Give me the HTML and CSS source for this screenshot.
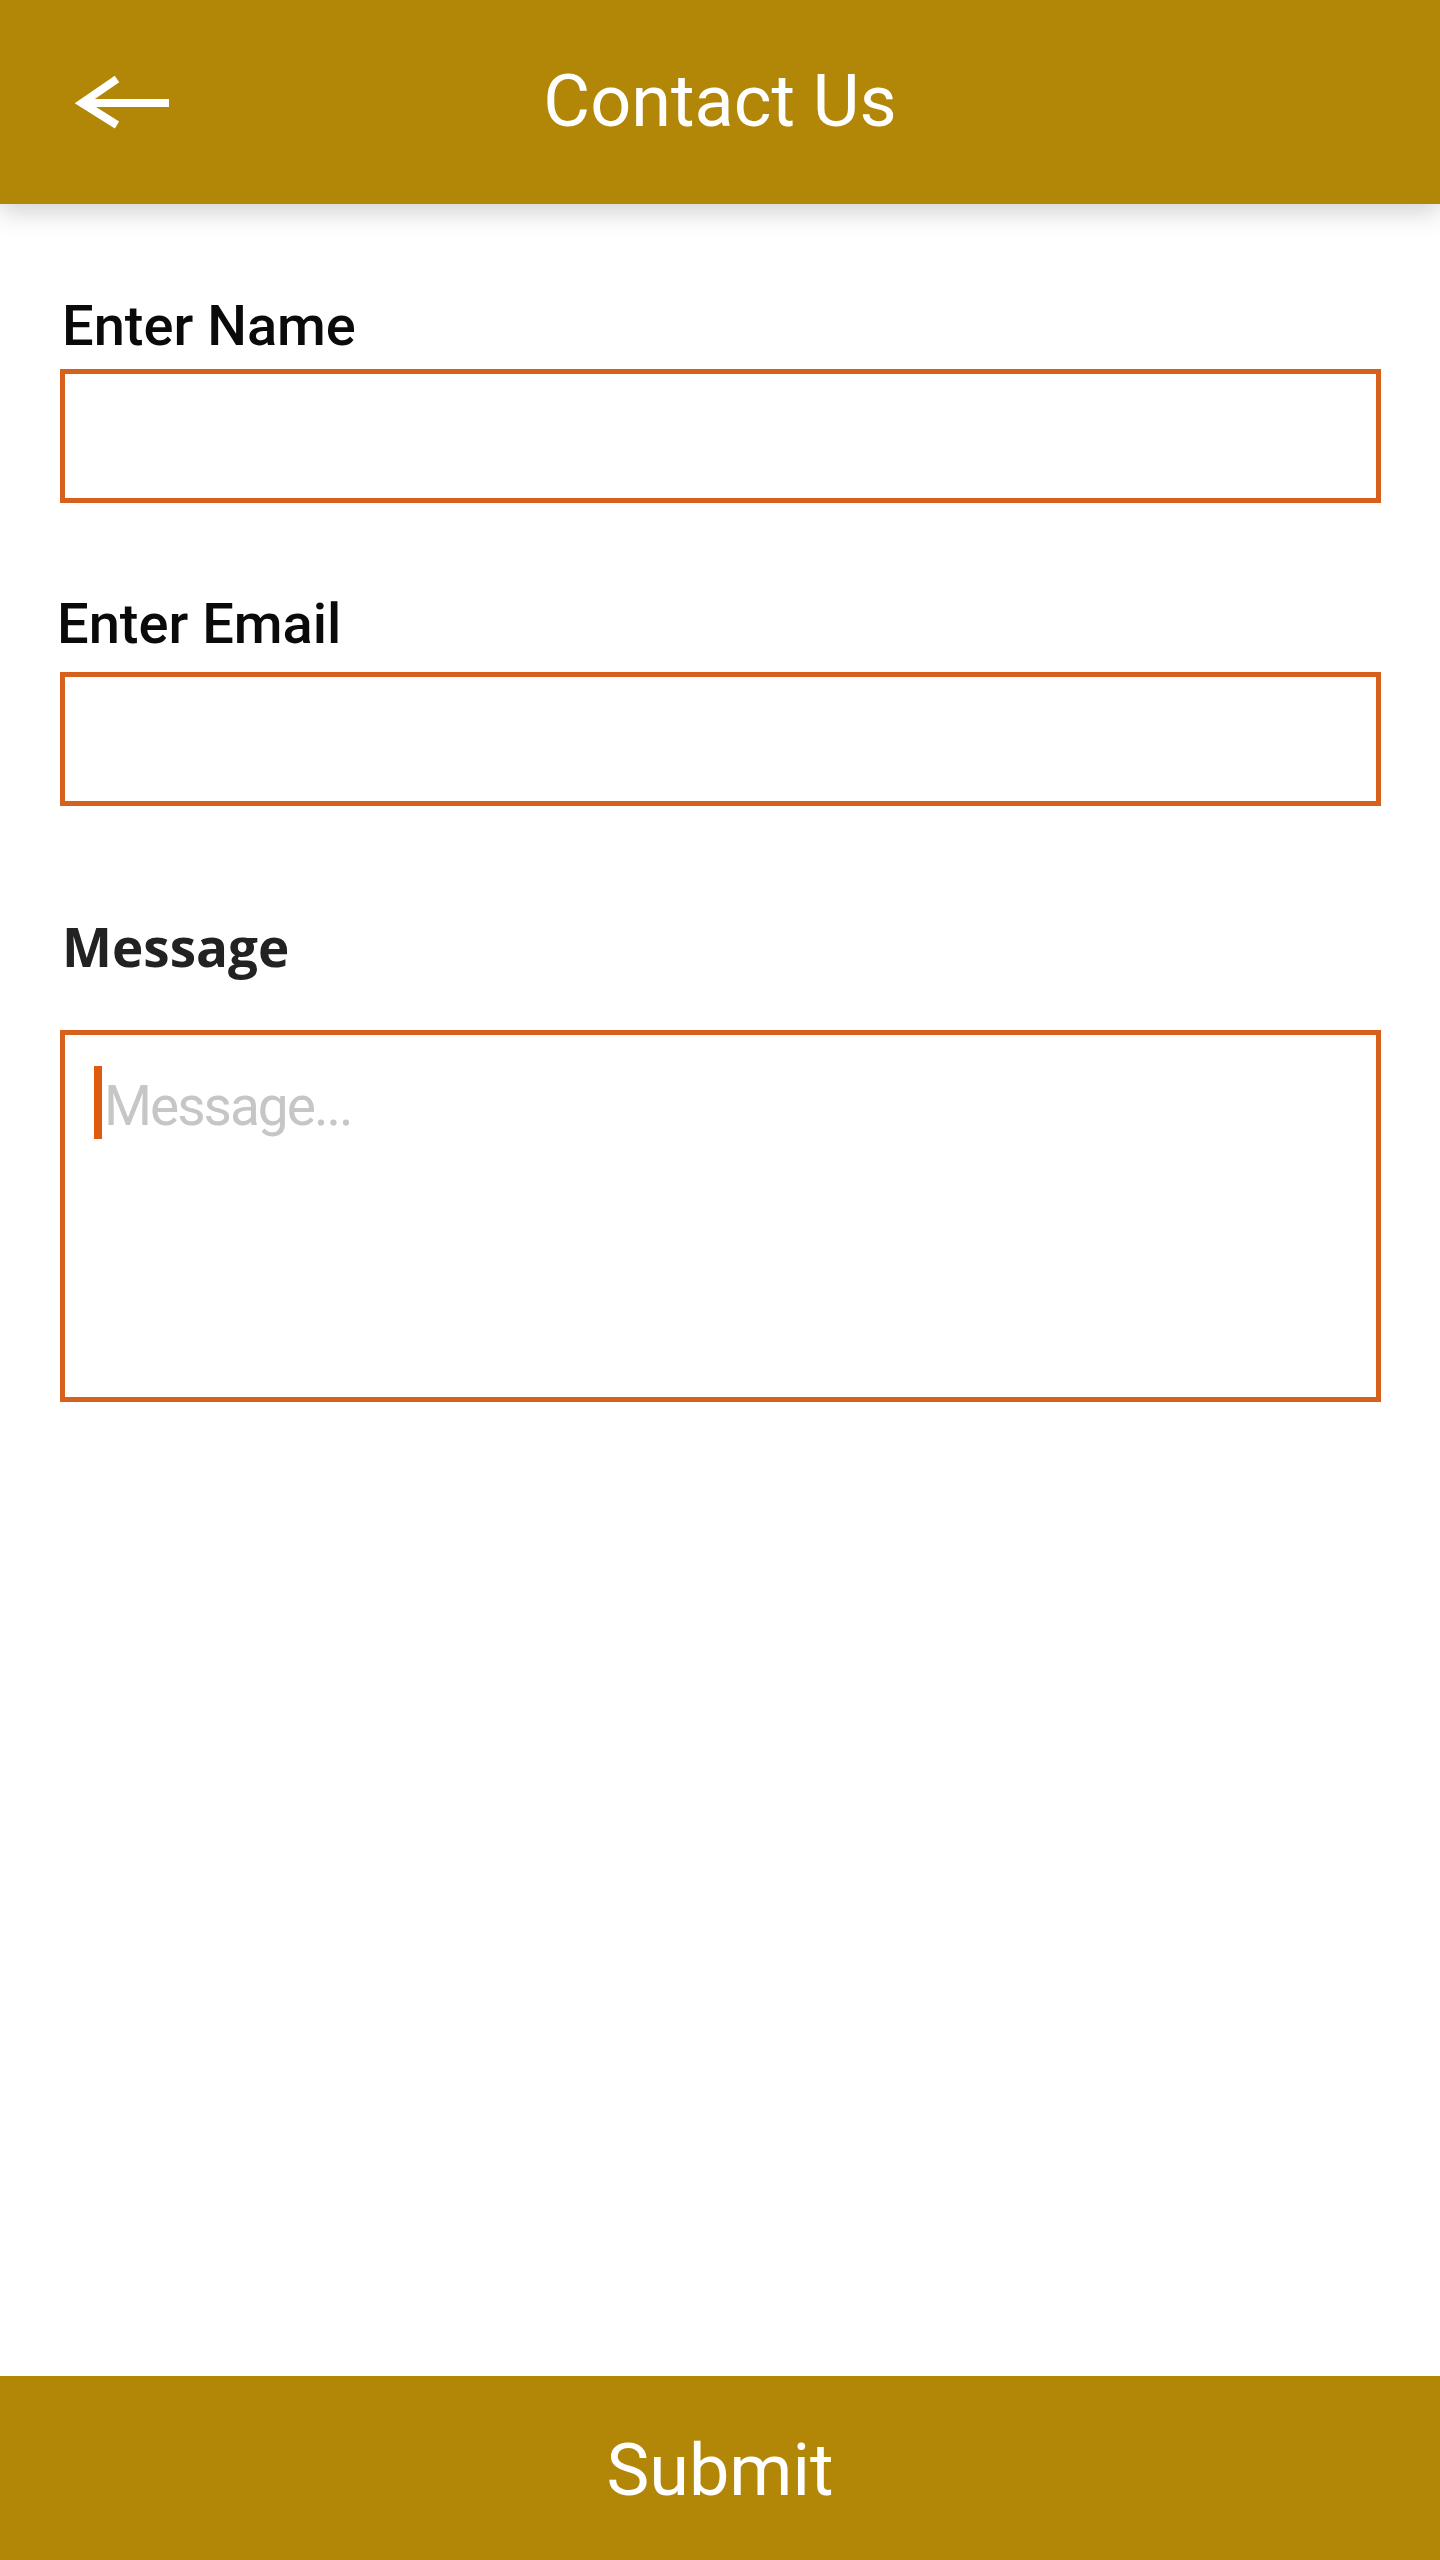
FILE: index.html
```html
<!DOCTYPE html>
<html lang="en">
<head>
<meta charset="utf-8">
<title>Contact Us</title>
<link rel="stylesheet" href="styles.css">
</head>
<body>
<div class="app">
  <header class="topbar">
    <div class="back">
      <svg width="110" height="60" viewBox="70 72 110 60" aria-hidden="true">
        <path d="M169 103 H88" stroke="#fff" stroke-width="8" fill="none"/>
        <path d="M117 79 L82 103 L117 125" stroke="#fff" stroke-width="8" fill="none" stroke-linejoin="miter"/>
      </svg>
    </div>
    <h1 class="title">Contact Us</h1>
    <div class="spacer"></div>
  </header>

  <main class="form">
    <label class="label label-name">Enter Name</label>
    <input class="field field-name" type="text">

    <label class="label label-email">Enter Email</label>
    <input class="field field-email" type="email">

    <label class="label-message">Message</label>
    <div class="area-wrap">
      <textarea class="area" placeholder="Message..."></textarea>
      <span class="caret"></span>
    </div>
  </main>

  <footer class="submit">Submit</footer>
</div>
</body>
</html>
```

FILE: styles.css
```css
html, body {
  margin: 0;
  padding: 0;
  background: #fff;
}

.app {
  min-height: 2560px;
  display: flex;
  flex-direction: column;
  font-family: Roboto, "Liberation Sans", sans-serif;
}

.topbar {
  height: 204px;
  background: #b28607;
  display: grid;
  grid-template-columns: 1fr auto 1fr;
  align-items: center;
  box-shadow: 0 8px 24px rgba(0, 0, 0, 0.18);
  position: relative;
  z-index: 1;
}

.back {
  padding-left: 70px;
  display: flex;
  align-items: center;
  height: 60px;
}

.back svg {
  display: block;
}

.title {
  margin: 0;
  color: #fff;
  font-weight: 400;
  font-size: 72px;
  line-height: 1;
}

.form {
  flex: 1;
  display: flex;
  flex-direction: column;
  padding: 0 59px 0 60px;
}

.label {
  display: block;
  font-weight: 500;
  font-size: 56px;
  line-height: 56px;
  color: #0a0a0a;
}

.label-name {
  margin-top: 94px;
  margin-left: 2px;
}

.field {
  display: block;
  box-sizing: border-box;
  width: 100%;
  height: 134px;
  margin: 15px 0 0;
  border: 5px solid #d6601c;
  border-radius: 0;
  background: #fff;
  outline: none;
  padding: 0 28px;
  font-family: Roboto, "Liberation Sans", sans-serif;
  font-size: 56px;
}

.label-email {
  margin-top: 93px;
  margin-left: -3px;
}

.field-email {
  margin-top: 20px;
}

.label-message {
  display: block;
  margin-top: 114px;
  margin-left: 2px;
  font-family: "Open Sans", Lato, sans-serif;
  font-weight: 700;
  font-size: 53px;
  line-height: 53px;
  color: #222;
}

.area-wrap {
  position: relative;
  margin-top: 57px;
}

.area {
  display: block;
  box-sizing: border-box;
  width: 100%;
  height: 372px;
  border: 5px solid #d6601c;
  border-radius: 0;
  outline: none;
  resize: none;
  padding: 43px 20px 0 39px;
  font-family: Roboto, "Liberation Sans", sans-serif;
  font-size: 55px;
  line-height: 56px;
  letter-spacing: -2px;
  color: #333;
}

.area::placeholder {
  color: #c6c6c6;
  opacity: 1;
}

.caret {
  position: absolute;
  left: 34px;
  top: 36px;
  width: 8px;
  height: 73px;
  background: #e05a10;
}

.submit {
  box-sizing: border-box;
  height: 184px;
  padding-top: 5px;
  background: #b28607;
  color: #fff;
  font-size: 72px;
  line-height: 1;
  display: flex;
  align-items: center;
  justify-content: center;
}
```
